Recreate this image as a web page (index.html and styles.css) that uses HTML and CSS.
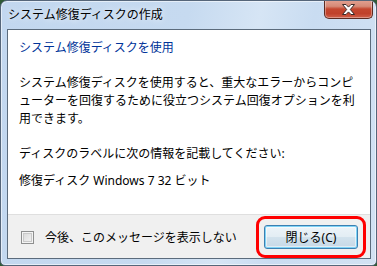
FILE: index.html
```html
<!DOCTYPE html>
<html lang="ja">
<head>
  <meta charset="UTF-8">
  <title>システム修復ディスクの作成</title>
  <link rel="stylesheet" href="styles.css">
</head>
<body>
  <div class="window">
    <div class="titlebar">
      <span class="title">システム修復ディスクの作成</span>
      <button class="close-btn" aria-label="閉じる">
        <svg width="15" height="11" viewBox="0 0 15 11">
          <path d="M1.5 0.5h3.5l2.5 2.6 2.5-2.6h3.5l-4.2 5 4.2 5h-3.5l-2.5-2.6-2.5 2.6h-3.5l4.2-5z" fill="#fff" stroke="#3b2a28" stroke-width="1" stroke-linejoin="round"/>
        </svg>
      </button>
    </div>

    <div class="client">
      <div class="content">
        <div class="main-instruction">システム修復ディスクを使用</div>
        <p class="text">システム修復ディスクを使用すると、重大なエラーからコンピューターを回復するために役立つシステム回復オプションを利用できます。</p>
        <p class="text label">ディスクのラベルに次の情報を記載してください:</p>
        <p class="text disk">修復ディスク Windows 7 32 ビット</p>
      </div>

      <div class="footer">
        <label class="check">
          <span class="checkbox"></span>
          今後、このメッセージを表示しない
        </label>
        <div class="btn-wrap">
          <button class="btn">閉じる(C)</button>
          <span class="highlight"></span>
        </div>
      </div>
    </div>
  </div>
</body>
</html>
```

FILE: styles.css
```css
* {
  box-sizing: border-box;
}

body {
  margin: 0;
  background: #2f5a35;
  font-family: "Noto Sans", "Noto Sans CJK JP", sans-serif;
  font-size: 12px;
  color: #000;
}

.window {
  width: 377px;
  height: 266px;
  display: flex;
  flex-direction: column;
  border: 1px solid #56667a;
  border-radius: 7px 7px 5px 5px;
  background: linear-gradient(100deg, #c2d7ef 0%, #c6daf0 45%, #d6e5f5 62%, #c9dcf1 75%, #d3e2f3 100%);
  box-shadow: inset 0 0 0 1px rgba(255,255,255,0.55);
  overflow: hidden;
}

.titlebar {
  height: 28px;
  display: flex;
  align-items: flex-start;
  padding-left: 7px;
}

.title {
  flex: 1;
  align-self: center;
  line-height: 18px;
  margin-top: -1px;
  text-shadow: 0 0 6px rgba(255,255,255,0.9);
}

.close-btn {
  width: 49px;
  height: 19px;
  margin: -1px 3px 0 0;
  padding: 0;
  border: 1px solid #5c2b22;
  border-top: none;
  border-radius: 0 0 5px 5px;
  background: linear-gradient(#e3a292 0%, #d68a77 35%, #c4472f 50%, #c0412b 75%, #cf604a 100%);
  box-shadow: inset 0 0 0 1px rgba(255,255,255,0.35);
  display: flex;
  align-items: center;
  justify-content: center;
}

.close-btn svg {
  display: block;
}

.client {
  flex: 1;
  display: flex;
  flex-direction: column;
  margin: 0 5px 6px 6px;
  border: 1px solid #5b6b7c;
  background: #fff;
}

.content {
  flex: 1;
  padding: 9px 11px 0;
}

.main-instruction {
  line-height: 18px;
  color: #003399;
}

.text {
  width: 340px;
  margin: 17px 0 0;
  line-height: 18px;
  line-break: loose;
}

.text.disk {
  margin-top: 9px;
}

.footer {
  height: 44px;
  display: flex;
  align-items: center;
  justify-content: space-between;
  padding: 0 12px 0 13px;
  background: #f0f0f0;
  border-top: 1px solid #dfdfdf;
}

.check {
  display: flex;
  align-items: center;
  gap: 11px;
  line-height: 18px;
  margin-top: 2px;
}

.checkbox {
  width: 13px;
  height: 13px;
  border: 1px solid #8e8f8f;
  background: linear-gradient(135deg, #d6d6d6, #f6f6f6);
  box-shadow: inset 0 0 0 1px #f4f4f4, inset 0 0 0 2px #c9c9c9;
}

.btn-wrap {
  position: relative;
}

.btn {
  display: block;
  width: 94px;
  height: 24px;
  padding: 0;
  font: inherit;
  color: #000;
  border: 1px solid #3c7fb1;
  border-radius: 3px;
  background: linear-gradient(#edf4f9 0%, #e3edf4 48%, #d2e2ed 52%, #c6d8e6 100%);
  box-shadow: inset 0 0 0 1px #7fd3f6, inset 0 0 0 2px rgba(255,255,255,0.5);
}

.highlight {
  position: absolute;
  left: -8px;
  right: -8px;
  top: -9px;
  bottom: -9px;
  border: 3px solid #ff0000;
  border-radius: 9px;
  pointer-events: none;
}
```
